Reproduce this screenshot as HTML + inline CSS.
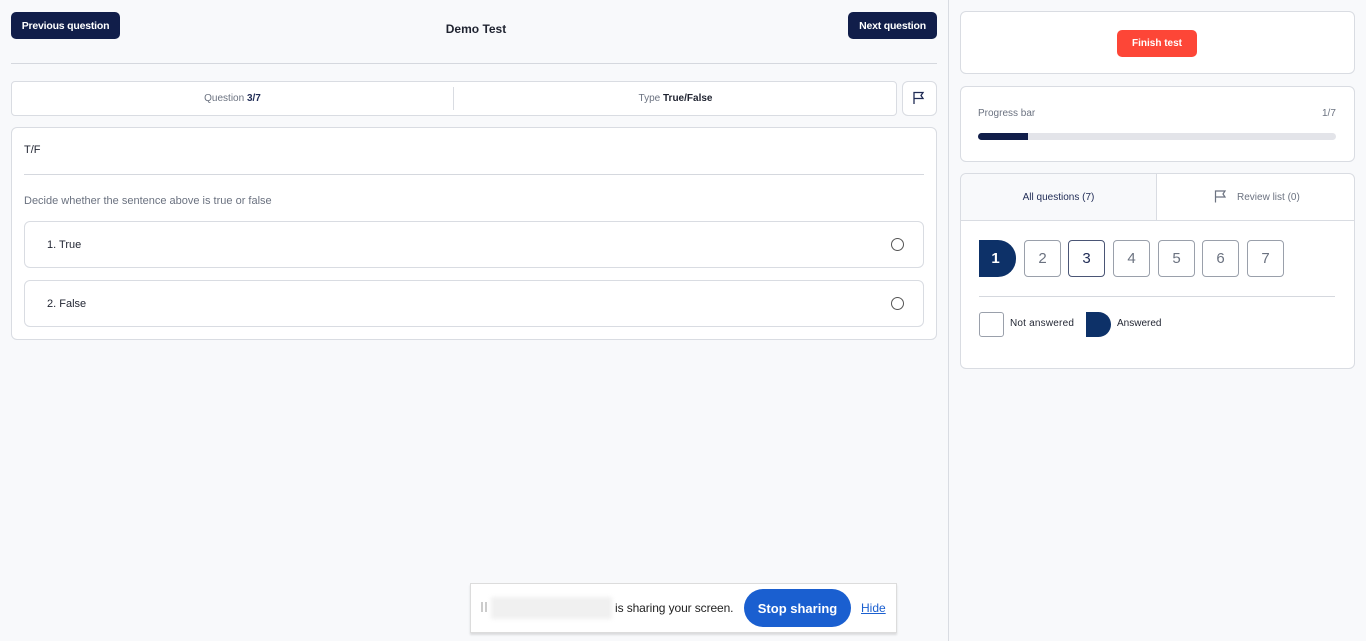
<!DOCTYPE html>
<html><head><meta charset="utf-8"><style>
*{box-sizing:border-box;margin:0;padding:0}
body{width:1366px;height:641px;background:#f8f9fb;font-family:"Liberation Sans",sans-serif;position:relative;overflow:hidden;color:#1f2330}
.a{position:absolute}
.btn{background:#111e4a;color:#fff;font-size:10.5px;font-weight:bold;border-radius:5px;display:flex;align-items:center;justify-content:center;letter-spacing:-0.2px}
.card{background:#fff;border:1px solid #d9dce2;border-radius:6px}
.num{width:37px;height:37px;border:1px solid #9aa0ab;border-radius:4px;background:#fff;color:#6b7280;font-size:15px;display:flex;align-items:center;justify-content:center}
.rad{width:13px;height:13px;border:1px solid #555;border-radius:50%}
</style></head><body>
<div class="a btn" style="left:11px;top:12px;width:109px;height:27px">Previous question</div>
<div class="a" style="left:426px;top:22px;width:100px;text-align:center;font-size:12px;font-weight:bold;color:#1f2330">Demo Test</div>
<div class="a btn" style="left:848px;top:12px;width:89px;height:27px">Next question</div>
<div class="a" style="left:11px;top:63px;width:926px;height:1px;background:#d5d8de"></div>
<div class="a card" style="left:11px;top:81px;width:886px;height:35px;border-radius:4px"></div>
<div class="a" style="left:453px;top:87px;width:1px;height:23px;background:#d9dce2"></div>
<div class="a" style="left:11px;top:93px;width:443px;text-align:center;font-size:10px;color:#6b7280">Question <b style="color:#1f2b55">3/7</b></div>
<div class="a" style="left:454px;top:93px;width:443px;text-align:center;font-size:10px;color:#6b7280">Type <b style="color:#1f2330">True/False</b></div>
<div class="a card" style="left:902px;top:81px;width:35px;height:35px"></div>
<svg class="a" style="left:912px;top:91px" width="14" height="14" viewBox="0 0 14 14" fill="none" stroke="#1f2b55" stroke-width="1.3"><path d="M2 13V1.5h9l-2 3 2 3H2"/></svg>
<div class="a card" style="left:11px;top:127px;width:926px;height:213px"></div>
<div class="a" style="left:24px;top:144px;font-size:11px">T/F</div>
<div class="a" style="left:24px;top:174px;width:900px;height:1px;background:#d5d8de"></div>
<div class="a" style="left:24px;top:195px;font-size:11px;color:#6b7280">Decide whether the sentence above is true or false</div>
<div class="a card" style="left:24px;top:221px;width:900px;height:47px"></div>
<div class="a" style="left:47px;top:239px;font-size:11px">1. True</div>
<div class="a rad" style="left:891px;top:238px"></div>
<div class="a card" style="left:24px;top:280px;width:900px;height:47px"></div>
<div class="a" style="left:47px;top:298px;font-size:11px">2. False</div>
<div class="a rad" style="left:891px;top:297px"></div>

<div class="a" style="left:948px;top:0;width:1px;height:641px;background:#d9dce2"></div>
<div class="a card" style="left:960px;top:11px;width:395px;height:63px"></div>
<div class="a" style="left:1117px;top:30px;width:80px;height:27px;background:#fd4637;border-radius:5px;color:#fff;font-size:10px;font-weight:bold;display:flex;align-items:center;justify-content:center">Finish test</div>
<div class="a card" style="left:960px;top:86px;width:395px;height:76px"></div>
<div class="a" style="left:978px;top:108px;font-size:10px;color:#6b7280">Progress bar</div>
<div class="a" style="left:1322px;top:108px;font-size:10px;color:#6b7280">1/7</div>
<div class="a" style="left:978px;top:133px;width:358px;height:7px;background:#e3e4e9;border-radius:4px"></div>
<div class="a" style="left:978px;top:133px;width:50px;height:7px;background:#111e4a;border-radius:4px 0 0 4px"></div>
<div class="a card" style="left:960px;top:173px;width:395px;height:196px;overflow:hidden"></div>
<div class="a" style="left:961px;top:174px;width:195px;height:46px;background:#f8f9fb;border-radius:6px 0 0 0"></div>
<div class="a" style="left:1156px;top:174px;width:1px;height:46px;background:#d9dce2"></div>
<div class="a" style="left:961px;top:220px;width:393px;height:1px;background:#d9dce2"></div>
<div class="a" style="left:961px;top:192px;width:195px;text-align:center;font-size:10px;color:#1f2b55">All questions (7)</div>
<svg class="a" style="left:1214px;top:190px" width="13" height="13" viewBox="0 0 13 13" fill="none" stroke="#6b7280" stroke-width="1.2"><path d="M1.5 12.5V1h9.5l-2 3 2 3H1.5"/></svg>
<div class="a" style="left:1237px;top:192px;font-size:10px;color:#6b7280">Review list (0)</div>
<div class="a" style="left:979px;top:240px;width:37px;height:37px;background:#0d3168;border-radius:0 18px 18px 0;color:#fff;font-size:15px;font-weight:bold;display:flex;align-items:center;justify-content:center;padding-right:4px">1</div>
<div class="a num" style="left:1024px;top:240px">2</div>
<div class="a num" style="left:1068px;top:240px;border-color:#4a5575;color:#1f2b55">3</div>
<div class="a num" style="left:1113px;top:240px">4</div>
<div class="a num" style="left:1158px;top:240px">5</div>
<div class="a num" style="left:1202px;top:240px">6</div>
<div class="a num" style="left:1247px;top:240px">7</div>
<div class="a" style="left:979px;top:296px;width:356px;height:1px;background:#d5d8de"></div>
<div class="a" style="left:979px;top:312px;width:25px;height:25px;border:1px solid #9aa0ab;border-radius:3px;background:#fff"></div>
<div class="a" style="left:1010px;top:318px;font-size:10px;letter-spacing:0.2px">Not answered</div>
<div class="a" style="left:1086px;top:312px;width:25px;height:25px;background:#0d3168;border-radius:0 13px 13px 0"></div>
<div class="a" style="left:1117px;top:318px;font-size:10px">Answered</div>

<div class="a" style="left:470px;top:583px;width:427px;height:50px;background:#fff;border:1px solid #dcdcdc;box-shadow:0 2px 2px rgba(0,0,0,.12)"></div>
<div class="a" style="left:481px;top:602px;width:2px;height:10px;background:#ccc"></div>
<div class="a" style="left:485px;top:602px;width:2px;height:10px;background:#ccc"></div>
<div class="a" style="left:491px;top:597px;width:121px;height:22px;background:#f0f0f0;filter:blur(2px)"></div>
<div class="a" style="left:615px;top:601px;font-size:12px;color:#222;letter-spacing:-0.1px">is sharing your screen.</div>
<div class="a" style="left:744px;top:589px;width:107px;height:38px;background:#1a5fd0;border-radius:19px;color:#fff;font-size:13px;font-weight:bold;display:flex;align-items:center;justify-content:center">Stop sharing</div>
<div class="a" style="left:861px;top:601px;font-size:12px;color:#1a5fd0;text-decoration:underline">Hide</div>
</body></html>
